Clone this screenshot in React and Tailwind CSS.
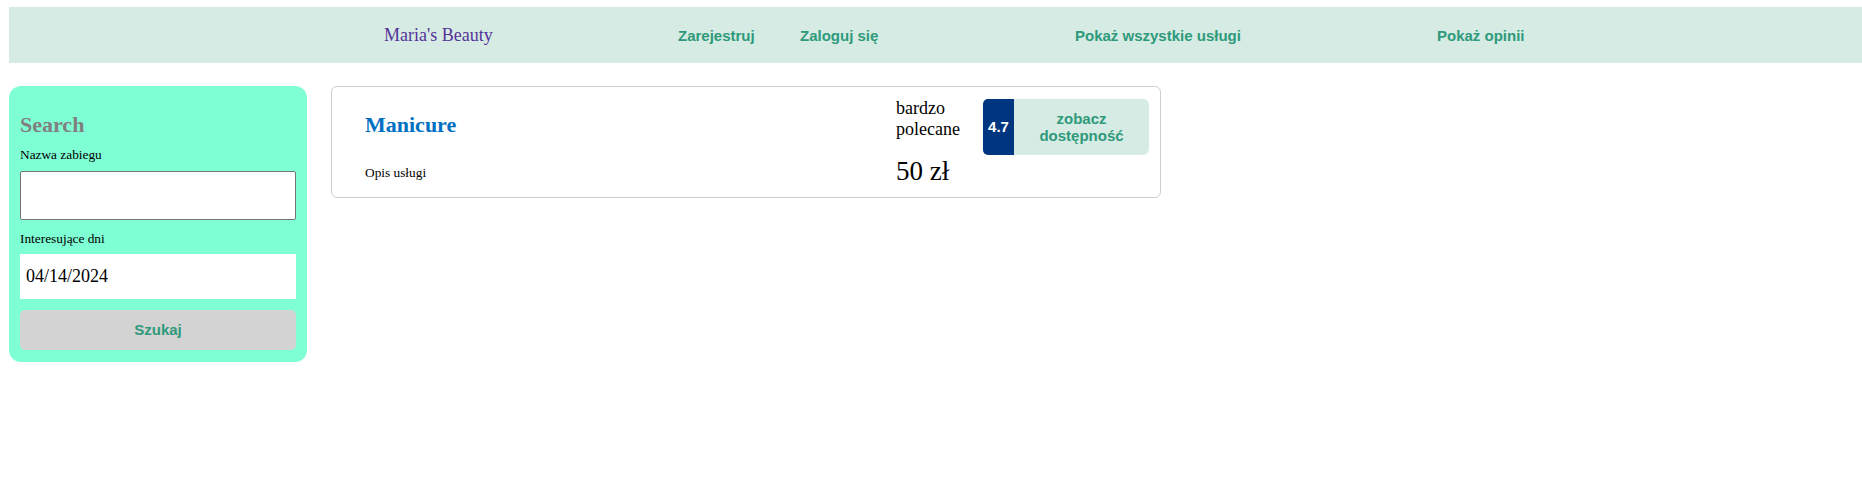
export default function App() {
  const serif = { fontFamily: '"Liberation Serif", "Times New Roman", serif' };
  const sans = { fontFamily: '"Liberation Sans", Arial, sans-serif' };
  return (
    <div className="min-h-[497px] bg-white pl-[9px] pt-[7px]">
      <nav className="flex h-[56px] w-full items-center bg-[#d5ebe3]">
        <div className="w-[375px]" />
        <div className="w-[294px] text-[18px] leading-[21px] text-[#553399]" style={serif}>
          Maria's Beauty
        </div>
        <div className="w-[122px] text-[15px] font-bold leading-[17px] text-[#2e9a7b]" style={sans}>
          Zarejestruj
        </div>
        <div className="w-[275px] text-[15px] font-bold leading-[17px] text-[#2e9a7b]" style={sans}>
          Zaloguj się
        </div>
        <div className="w-[362px] text-[15px] font-bold leading-[17px] text-[#2e9a7b]" style={sans}>
          Pokaż wszystkie usługi
        </div>
        <div className="text-[15px] font-bold leading-[17px] text-[#2e9a7b]" style={sans}>
          Pokaż opinii
        </div>
      </nav>

      <div className="mt-[23px] flex items-start gap-[24px]">
        <aside
          className="flex w-[298px] flex-col rounded-[12px] bg-[#7fffd4] px-[11px] pb-[12px] pt-[26px]"
          style={serif}
        >
          <h2 className="text-[22px] font-bold leading-[25px] text-[#808080]">Search</h2>
          <label className="mt-[10px] text-[13.33px] leading-[15px] text-black">Nazwa zabiegu</label>
          <div className="mt-[9px] h-[49px] w-full rounded-[2px] border border-[#767676] bg-white" />
          <label className="mt-[11px] text-[13.33px] leading-[15px] text-black">Interesujące dni</label>
          <div className="mt-[8px] flex h-[45px] w-full items-center bg-white pl-[6px] text-[18px] text-black">
            04/14/2024
          </div>
          <button
            className="mt-[11px] flex h-[40px] w-full items-center justify-center rounded-[5px] bg-[#d3d3d3] text-[15px] font-bold text-[#2e9a7b]"
            style={sans}
          >
            Szukaj
          </button>
        </aside>

        <div className="flex h-[112px] w-[830px] rounded-[6px] border border-[#cfcfcf] bg-white">
          <div className="flex flex-1 flex-col pl-[33px] pt-[25px]" style={serif}>
            <div className="text-[22px] font-bold leading-[26px] text-[#0071c2]">Manicure</div>
            <div className="mt-[27px] text-[13.33px] leading-[15px] text-black">Opis usługi</div>
          </div>
          <div className="flex w-[87px] flex-col pt-[11px]" style={serif}>
            <div className="text-[18px] leading-[21px] text-black">
              bardzo
              <br />
              polecane
            </div>
            <div className="mt-[16px] text-[27px] leading-[31px] text-black">50 zł</div>
          </div>
          <div className="flex pr-[11px] pt-[12px]">
            <div
              className="flex h-[56px] w-[31px] items-center justify-center rounded-l-[5px] bg-[#003580] text-[15px] font-bold text-white"
              style={sans}
            >
              4.7
            </div>
            <button
              className="flex h-[56px] w-[135px] items-center justify-center rounded-r-[6px] bg-[#d5ebe3] text-center text-[15px] font-bold leading-[17px] text-[#2e9a7b]"
              style={sans}
            >
              zobacz
              <br />
              dostępność
            </button>
          </div>
        </div>
      </div>
    </div>
  );
}
